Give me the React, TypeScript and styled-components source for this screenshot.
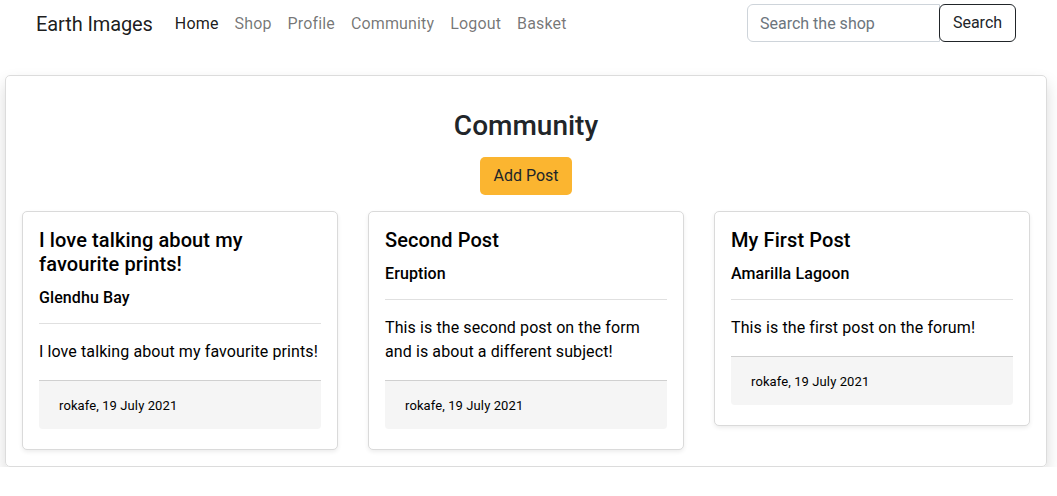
import React from "react";
import styled, { createGlobalStyle } from "styled-components";

const GlobalStyle = createGlobalStyle`
  * { box-sizing: border-box; }
  body {
    margin: 0;
    background: #ffffff;
    font-family: Roboto, "Liberation Sans", Arial, sans-serif;
    color: #212529;
    font-size: 16px;
    line-height: 1.5;
  }
`;

const NavBar = styled.nav`
  display: flex;
  align-items: center;
  height: 46px;
  padding: 1px 41px 0 36px;
`;

const Brand = styled.a`
  font-size: 20px;
  color: rgba(0, 0, 0, 0.9);
  margin-right: 14px;
  text-decoration: none;
  white-space: nowrap;
  letter-spacing: -0.1px;
`;

const NavList = styled.ul`
  display: flex;
  list-style: none;
  margin: 0;
  padding: 0;
  flex: 1;
`;

const NavLink = styled.a<{ $active?: boolean }>`
  display: block;
  padding: 8px;
  color: ${(p) => (p.$active ? "rgba(0,0,0,0.9)" : "rgba(0,0,0,0.55)")};
  text-decoration: none;
  white-space: nowrap;
  letter-spacing: 0.15px;
`;

const SearchForm = styled.form`
  display: flex;
  margin-top: -1px;
`;

const SearchInput = styled.input`
  width: 193px;
  height: 38px;
  padding: 6px 12px;
  font: inherit;
  font-size: 16px;
  color: #212529;
  border: 1px solid #ced4da;
  border-radius: 6px 0 0 6px;
  outline: none;
  &::placeholder {
    color: #6c757d;
  }
`;

const SearchButton = styled.button`
  width: 77px;
  height: 38px;
  font: inherit;
  font-size: 16px;
  color: #212529;
  background: #fff;
  border: 1px solid #212529;
  border-radius: 6px;
  margin-left: -1px;
  cursor: pointer;
`;

const Panel = styled.main`
  margin: 29px 10px 0 5px;
  border: 1px solid #dcdcdc;
  border-radius: 5px;
  box-shadow: 0 8px 16px rgba(0, 0, 0, 0.15);
  padding: 16px;
  display: flex;
  flex-direction: column;
  align-items: center;
`;

const Heading = styled.h2`
  margin: 17px 0 0;
  font-size: 28px;
  font-weight: 500;
  line-height: 1.2;
  color: #212529;
`;

const AddButton = styled.button`
  margin-top: 14px;
  height: 38px;
  padding: 6px 13px;
  font: inherit;
  font-size: 16px;
  color: #212529;
  background: #fbb530;
  border: none;
  border-radius: 5px;
  cursor: pointer;
`;

const CardGrid = styled.div`
  align-self: stretch;
  margin-top: 16px;
  display: grid;
  grid-template-columns: repeat(3, 1fr);
  gap: 30px;
  align-items: start;
`;

const Card = styled.article`
  border: 1px solid #dadada;
  border-radius: 5px;
  box-shadow: 0 2px 4px rgba(0, 0, 0, 0.075);
  padding: 16px 16px 20px;
  background: #fff;
  letter-spacing: 0.1px;
`;

const CardTitle = styled.h5`
  margin: 0;
  font-size: 20px;
  font-weight: 500;
  line-height: 24px;
  color: #000;
`;

const CardSubtitle = styled.h6`
  margin: 12px 0 0;
  font-size: 16px;
  font-weight: 500;
  line-height: 19px;
  color: #000;
`;

const Divider = styled.hr`
  margin: 16px 0;
  border: 0;
  border-top: 1px solid rgba(0, 0, 0, 0.12);
`;

const CardText = styled.p`
  margin: 0 0 16px;
  font-size: 16px;
  line-height: 24px;
  color: #000;
`;

const CardFooter = styled.div`
  background: #f5f5f5;
  border-top: 1px solid rgba(0, 0, 0, 0.15);
  border-radius: 0 0 4px 4px;
  padding: 15px 20px 13px;
  font-size: 13px;
  line-height: 20px;
  color: #000;
`;

const posts = [
  {
    title: "I love talking about my favourite prints!",
    subtitle: "Glendhu Bay",
    text: "I love talking about my favourite prints!",
    meta: "rokafe, 19 July 2021",
  },
  {
    title: "Second Post",
    subtitle: "Eruption",
    text: "This is the second post on the form and is about a different subject!",
    meta: "rokafe, 19 July 2021",
  },
  {
    title: "My First Post",
    subtitle: "Amarilla Lagoon",
    text: "This is the first post on the forum!",
    meta: "rokafe, 19 July 2021",
  },
];

const links = ["Home", "Shop", "Profile", "Community", "Logout", "Basket"];

export default function App() {
  return (
    <>
      <GlobalStyle />
      <NavBar>
        <Brand href="#">Earth Images</Brand>
        <NavList>
          {links.map((l, i) => (
            <li key={l}>
              <NavLink href="#" $active={i === 0}>
                {l}
              </NavLink>
            </li>
          ))}
        </NavList>
        <SearchForm onSubmit={(e) => e.preventDefault()}>
          <SearchInput placeholder="Search the shop" />
          <SearchButton type="submit">Search</SearchButton>
        </SearchForm>
      </NavBar>
      <Panel>
        <Heading>Community</Heading>
        <AddButton>Add Post</AddButton>
        <CardGrid>
          {posts.map((p) => (
            <Card key={p.title}>
              <CardTitle>{p.title}</CardTitle>
              <CardSubtitle>{p.subtitle}</CardSubtitle>
              <Divider />
              <CardText>{p.text}</CardText>
              <CardFooter>{p.meta}</CardFooter>
            </Card>
          ))}
        </CardGrid>
      </Panel>
    </>
  );
}
